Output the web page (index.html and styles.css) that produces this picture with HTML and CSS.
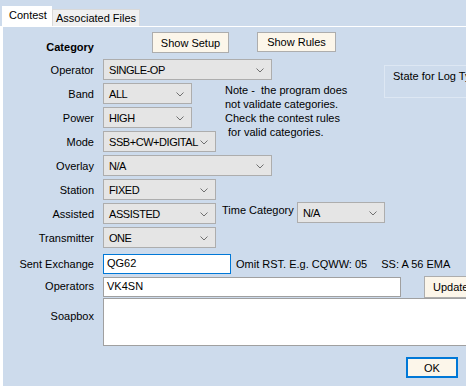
FILE: index.html
```html
<!DOCTYPE html>
<html>
<head>
<meta charset="utf-8">
<link rel="stylesheet" href="styles.css">
</head>
<body>
<div class="window">
  <div class="tabs">
    <div class="tab active">Contest</div>
    <div class="tab other">Associated Files</div>
  </div>
  <div class="panel">
    <div class="header">
      <div class="cat">Category</div>
      <button class="btn setup">Show Setup</button>
      <button class="btn rules">Show Rules</button>
    </div>

    <div class="cats">
      <div class="lbl">Operator</div>
      <div class="combo w169"><span>SINGLE-OP</span><svg class="chev" viewBox="0 0 8 5"><polyline points="0.5,0.5 4,4 7.5,0.5"/></svg></div>
      <div class="state"><span>State for Log Type</span></div>

      <div class="lbl">Band</div>
      <div class="combo w89"><span>ALL</span><svg class="chev" viewBox="0 0 8 5"><polyline points="0.5,0.5 4,4 7.5,0.5"/></svg></div>
      <div class="note">Note -&nbsp; the program does<br>not validate categories.<br>Check the contest rules<br>&nbsp;for valid categories.</div>

      <div class="lbl">Power</div>
      <div class="combo w89"><span>HIGH</span><svg class="chev" viewBox="0 0 8 5"><polyline points="0.5,0.5 4,4 7.5,0.5"/></svg></div>

      <div class="lbl">Mode</div>
      <div class="combo w113"><span>SSB+CW+DIGITAL</span><svg class="chev" viewBox="0 0 8 5"><polyline points="0.5,0.5 4,4 7.5,0.5"/></svg></div>

      <div class="lbl">Overlay</div>
      <div class="combo w169"><span>N/A</span><svg class="chev" viewBox="0 0 8 5"><polyline points="0.5,0.5 4,4 7.5,0.5"/></svg></div>

      <div class="lbl">Station</div>
      <div class="combo w113"><span>FIXED</span><svg class="chev" viewBox="0 0 8 5"><polyline points="0.5,0.5 4,4 7.5,0.5"/></svg></div>

      <div class="lbl">Assisted</div>
      <div class="combo w113"><span>ASSISTED</span><svg class="chev" viewBox="0 0 8 5"><polyline points="0.5,0.5 4,4 7.5,0.5"/></svg></div>
      <div class="timecat">
        <div class="tlbl">Time Category</div>
        <div class="combo w88 up"><span>N/A</span><svg class="chev" viewBox="0 0 8 5"><polyline points="0.5,0.5 4,4 7.5,0.5"/></svg></div>
      </div>

      <div class="lbl">Transmitter</div>
      <div class="combo w113"><span>ONE</span><svg class="chev" viewBox="0 0 8 5"><polyline points="0.5,0.5 4,4 7.5,0.5"/></svg></div>
    </div>

    <div class="entries">
      <div class="lbl">Sent Exchange</div>
      <div class="line">
        <div class="input sent">QG62</div>
        <span class="hint">Omit RST. E.g. CQWW: 05</span>
        <span class="hint ss">SS: A 56 EMA</span>
      </div>

      <div class="lbl">Operators</div>
      <div class="line">
        <div class="input ops">VK4SN</div>
        <button class="btn update">Update</button>
      </div>

      <div class="lbl top">Soapbox</div>
      <div class="line">
        <div class="soap"></div>
      </div>
    </div>

    <div class="footer">
      <button class="btn ok">OK</button>
    </div>
  </div>
</div>
</body>
</html>
```
FILE: styles.css
```css
html, body {
  margin: 0;
  padding: 0;
}
body {
  width: 466px;
  height: 386px;
  overflow: hidden;
  background: #cddbec;
  font-family: "Liberation Sans", Arial, sans-serif;
  font-size: 11px;
  color: #000;
}
.window {
  width: 466px;
  height: 386px;
  display: flex;
  flex-direction: column;
}
.tabs {
  height: 26px;
  display: flex;
  align-items: flex-end;
  padding-left: 2px;
  position: relative;
  z-index: 2;
}
.tab {
  box-sizing: border-box;
  white-space: nowrap;
}
.tab.active {
  width: 50px;
  height: 21px;
  margin-bottom: -1px;
  background: #fff;
  padding: 3px 0 0 7px;
}
.tab.other {
  width: 88px;
  height: 17px;
  background: #f0f0f0;
  border: 1px solid #d9d9d9;
  border-bottom: none;
  padding: 2px 0 0 3px;
}
.panel {
  flex: 1;
  border-top: 1px solid #fff;
  border-left: 3px solid #fff;
  padding-top: 5px;
  display: flex;
  flex-direction: column;
}
.header {
  display: flex;
  height: 21px;
  margin-bottom: 6px;
}
.cat {
  width: 91px;
  text-align: right;
  font-weight: bold;
  line-height: 13px;
  align-self: flex-end;
  position: relative;
  top: 1px;
}
.btn {
  font-family: "Liberation Sans", Arial, sans-serif;
  font-size: 11px;
  color: #000;
  background: #fcf6ea;
  border: 1px solid #adadad;
  box-sizing: border-box;
  padding: 0;
  margin: 0;
  height: 21px;
  flex-shrink: 0;
}
.setup {
  margin-left: 58px;
  width: 77px;
}
.rules {
  margin-left: 28px;
  width: 79px;
  height: 20px;
}
.cats {
  display: grid;
  grid-template-columns: 91px 113px 150px 82px;
  grid-auto-rows: 21px;
  column-gap: 9px;
  row-gap: 3px;
}
.lbl {
  text-align: right;
  align-self: center;
  white-space: nowrap;
  grid-column: 1;
}
.combo {
  grid-column: 2;
  box-sizing: border-box;
  height: 21px;
  background: #e5e5e5;
  border: 1px solid #adadad;
  display: flex;
  align-items: center;
  justify-content: space-between;
  padding: 1px 7px 0 5px;
  white-space: nowrap;
}
.combo span {
  letter-spacing: -0.45px;
}
.chev {
  width: 8px;
  height: 5px;
  flex-shrink: 0;
  fill: none;
  stroke: #707070;
  stroke-width: 1;
}
.w169 { width: 169px; grid-column: 2 / 4; }
.w89 { width: 89px; }
.w113 { width: 113px; }
.w88 { width: 88px; }
.state {
  grid-column: 4;
  grid-row: 1 / 3;
  margin-top: 6px;
  height: 33px;
  box-sizing: border-box;
  border: 1px solid #dde7f3;
  border-right: none;
  padding: 3px 0 0 8px;
  white-space: nowrap;
  overflow: hidden;
  line-height: 14px;
}
.note {
  grid-column: 3;
  grid-row: 2 / 5;
  line-height: 14px;
  white-space: nowrap;
}
.timecat {
  grid-column: 3 / 5;
  grid-row: 7;
  display: flex;
  align-items: flex-start;
  margin-left: -3px;
}
.tlbl {
  width: 75px;
  line-height: 14px;
  white-space: nowrap;
}
.combo.up {
  margin-top: -1px;
  grid-column: auto;
}
.entries {
  display: grid;
  grid-template-columns: 91px 1fr;
  column-gap: 9px;
  grid-template-rows: 20px 20px 48px;
  row-gap: 2px;
  margin-top: 6px;
}
.entries .lbl.top {
  align-self: start;
  padding-top: 12px;
}
.line {
  display: flex;
  align-items: center;
  white-space: nowrap;
  min-width: 0;
}
.input {
  box-sizing: border-box;
  height: 20px;
  background: #fff;
  border: 1px solid #a0a0a0;
  padding: 2px 0 0 3px;
  flex-shrink: 0;
}
.input.sent {
  width: 128px;
  border-color: #0078d7;
}
.hint {
  margin-left: 5px;
  flex-shrink: 0;
}
.hint.ss {
  margin-left: 14px;
}
.input.ops {
  width: 298px;
  margin-top: 1px;
}
.update {
  margin-left: 23px;
  width: 70px;
  height: 22px;
  margin-top: 2px;
  text-align: left;
  padding-left: 8px;
}
.soap {
  flex-shrink: 0;
  width: 380px;
  height: 48px;
  box-sizing: border-box;
  background: #fff;
  border: 1px solid #a0a0a0;
  align-self: stretch;
}
.footer {
  display: flex;
  justify-content: flex-end;
  padding-right: 8px;
  margin-top: 11px;
}
.ok {
  width: 52px;
  height: 21px;
  border: 2px solid #0078d7;
}
```
